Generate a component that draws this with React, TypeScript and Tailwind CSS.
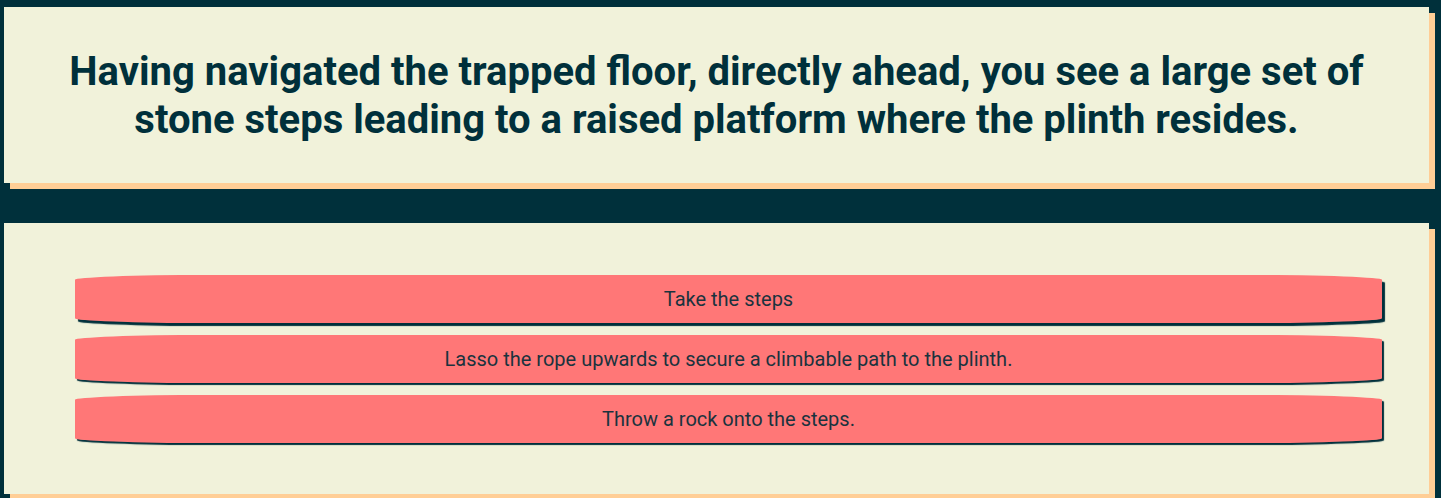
const choices = [
  { text: "Take the steps", shadow: "shadow-[3px_3px_1px_#00303b]" },
  { text: "Lasso the rope upwards to secure a climbable path to the plinth.", shadow: "shadow-[2px_2px_1px_#00303b]" },
  { text: "Throw a rock onto the steps.", shadow: "shadow-[2px_2px_1px_#00303b]" },
];

export default function App() {
  return (
    <main className="flex min-h-screen flex-col gap-10 bg-[#00303b] pt-[7px] pr-3 pb-1 pl-1 font-['Roboto',sans-serif] text-[#00303b]">
      <section className="bg-[#f1f2da] px-10 pt-[41px] pb-[39px] text-center shadow-[6px_6px_0px_#ffce96]">
        <h1 className="text-[40px] leading-12 font-bold">
          Having navigated the trapped floor, directly ahead, you see a large set of stone steps leading to a raised platform where the plinth resides.
        </h1>
      </section>
      <section className="bg-[#f1f2da] pt-[52px] pr-[47px] pb-[51px] pl-[71px] shadow-[6px_6px_0px_#ffce96]">
        <ul className="flex flex-col gap-3">
          {choices.map(({ text, shadow }) => (
            <li key={text} className="flex">
              <button type="button" className={`w-full cursor-pointer rounded-[10%] bg-[#ff7777] px-4 py-3 text-xl leading-6 text-[#1a333e] ${shadow}`}>
                {text}
              </button>
            </li>
          ))}
        </ul>
      </section>
    </main>
  );
}
